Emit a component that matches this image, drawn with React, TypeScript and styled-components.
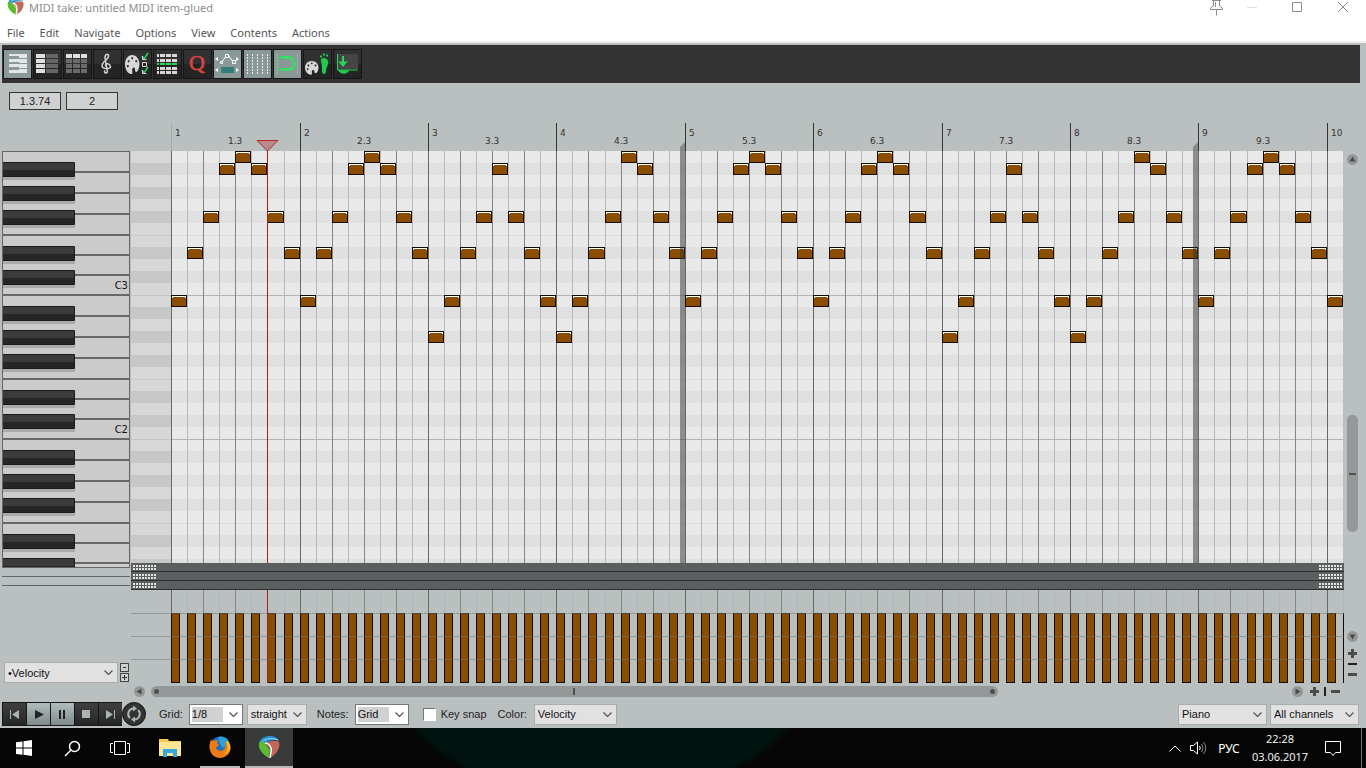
import React, { useEffect, useState } from "react";
import styled, { createGlobalStyle } from "styled-components";

const ui = '"Liberation Sans", Arial, sans-serif';
const segoe = '"Noto Sans", "Open Sans", sans-serif';
const panel = "#bac0c0";

const Global = createGlobalStyle`
  * { box-sizing: border-box; }
  body { margin: 0; background: ${panel}; }
  button { padding: 0; border: 0; background: none; color: inherit; font: inherit; }
  svg { display: block; }
`;

const Page = styled.div`
  display: flex;
  flex-direction: column;
  height: 100vh;
  min-height: 480px;
  font: 11px ${ui};
  color: #222;
  background: ${panel};
`;

/* ---------- title and menu ---------- */
const TitleBar = styled.header`
  display: flex;
  align-items: flex-start;
  height: 22px;
  padding-left: 7px;
  background: #fff;
  color: #8c8c8c;
`;
const Title = styled.h1`
  flex: 1;
  margin: 0 0 0 5px;
  font: 400 11px/16px ${segoe};
`;
const CaptionButton = styled.button<{ $w: number }>`
  display: flex;
  justify-content: center;
  width: ${(p) => p.$w}px;
  height: 16px;
`;
const MenuBar = styled.nav`
  display: flex;
  align-items: flex-start;
  gap: 15px;
  height: 21px;
  padding: 0 7px;
  background: #fff;
  border-bottom: 2px solid #f0f0f0;
  font: 11px/21px ${segoe};
  color: #555;
`;

/* ---------- toolbar ---------- */
const Toolbar = styled.div`
  display: flex;
  align-items: flex-start;
  gap: 1px;
  height: 38px;
  margin: 2px 6px 0 2px;
  padding: 4px 1px;
  background: #333;
`;
const Tool = styled.button<{ $on?: boolean }>`
  width: 29px;
  height: 30px;
  border: 1px solid #161616;
  background: ${(p) => (p.$on ? "#8a9898" : "linear-gradient(#303030 50%, #242424 50%)")};
`;

/* ---------- editor ---------- */
const InfoBar = styled.div`
  display: flex;
  gap: 5px;
  height: 32px;
  padding: 9px 9px 0;
`;
const InfoBox = styled.output`
  width: 52px;
  height: 18px;
  border: 1px solid #333;
  background: #d0d2d2;
  font: 11px/17px ${ui};
  text-align: center;
`;
const Editor = styled.main`
  flex: 1;
  min-height: 0;
  display: grid;
  grid-template-columns: 131px minmax(0, 1fr) 22px;
`;
const KeyColumn = styled.section`
  display: flex;
  flex-direction: column;
  min-height: 0;
  padding: 36px 0 0 2px;
`;
const KeysBox = styled.div`
  flex: 1;
  min-height: 0;
  width: 128px;
  border: 1px solid #666;
  border-left-width: 0;
  overflow: hidden;
  background: #cbcbcb;
  svg { width: 100%; height: 100%; }
`;
const LaneMark = styled.div`
  width: 128px;
  height: 9px;
  border-bottom: 1px solid #62666a;
`;
const LaneControls = styled.div`
  display: flex;
  align-items: flex-end;
  gap: 2px;
  height: 114px;
  padding: 0 0 17px 2px;
`;
const StackedButtons = styled.div`
  display: flex;
  flex-direction: column;
  gap: 1px;
  margin-bottom: 1px;
`;
const TinyButton = styled.button`
  width: 9px;
  height: 9px;
  border: 1px solid #444;
  background: #cdd0d0;
`;
const Timeline = styled.section`
  display: flex;
  flex-direction: column;
  min-height: 0;
`;
const Strip = styled.div<{ $h?: number }>`
  flex: ${(p) => (p.$h ? `0 0 ${p.$h}px` : "1 1 0")};
  min-height: 0;
  overflow: hidden;
  svg { width: 100%; height: 100%; }
`;
const Lane = styled.div`
  display: flex;
  justify-content: space-between;
  align-items: flex-end;
  height: 9px;
  padding: 0 1px 0 2px;
  background: #5b5f5f;
  border-bottom: 1px solid #2c3030;
`;
const ScrollRow = styled.div`
  display: flex;
  align-items: center;
  height: 17px;
  padding: 0 4px 0 3px;
`;
const ScrollTrack = styled.div`
  flex: 1;
  padding: 0 12px 0 6px;
`;
const ScrollThumb = styled.div`
  display: flex;
  align-items: center;
  justify-content: space-between;
  width: 75%;
  height: 11px;
  padding: 0 3px;
  border-radius: 6px;
  background: #949898;
`;
const Knob = styled.i`
  width: 5px;
  height: 5px;
  border-radius: 50%;
  background: #505050;
`;
const Notch = styled.i<{ $flat?: boolean }>`
  width: ${(p) => (p.$flat ? 7 : 2)}px;
  height: ${(p) => (p.$flat ? 2 : 7)}px;
  background: #505050;
`;
const ZoomNotch = styled.i<{ $flat?: boolean }>`
  width: ${(p) => (p.$flat ? 9 : 2)}px;
  height: ${(p) => (p.$flat ? 2 : 9)}px;
  background: #222;
`;
const ZoomGroup = styled.div<{ $column?: boolean }>`
  display: flex;
  flex-direction: ${(p) => (p.$column ? "column" : "row")};
  align-items: center;
  gap: 5px;
  margin: ${(p) => (p.$column ? "7px 0 0" : "0 0 0 7px")};
`;
const VerticalBar = styled.aside`
  display: flex;
  flex-direction: column;
  align-items: center;
  padding: 39px 5px 21px 0;
`;
const VerticalTrack = styled.div`
  flex: 1;
  display: flex;
  flex-direction: column;
  justify-content: flex-end;
  padding-bottom: 99px;
`;
const VerticalThumb = styled.div`
  display: flex;
  align-items: center;
  justify-content: center;
  width: 11px;
  height: 117px;
  border-radius: 5px;
  background: #949898;
`;
const IconButton = styled.button`
  display: block;
`;

/* ---------- bottom controls ---------- */
const ControlBar = styled.footer`
  display: flex;
  align-items: center;
  height: 28px;
  padding: 0 7px 0 2px;
`;
const Transport = styled.div`
  display: flex;
  height: 24px;
  border: 1px solid #161616;
  border-right: 0;
  background: #161616;
  gap: 1px;
`;
const TransportButton = styled.button<{ $lit?: boolean }>`
  width: 23px;
  height: 22px;
  color: ${(p) => (p.$lit ? "#222" : "#aab4b4")};
  background: ${(p) => (p.$lit ? "linear-gradient(#b2bcbc, #7f8b8b)" : "linear-gradient(#404040, #262626)")};
`;
const RepeatButton = styled.button`
  width: 24px;
  height: 24px;
  border: 1px solid #161616;
  border-radius: 50%;
  background: #333;
`;
const Label = styled.label<{ $before: number; $after: number }>`
  margin: 0 ${(p) => p.$after}px 0 ${(p) => p.$before}px;
  line-height: 16px;
`;
const Check = styled.input`
  appearance: none;
  width: 13px;
  height: 13px;
  margin: 0 0 0 14px;
  border: 1px solid;
  border-color: #777 #fff #fff #777;
  background: #fff;
`;
const Spacer = styled.div`
  flex: 1;
`;
const SelectBox = styled.span<{ $w: number; $edit?: boolean; $gap?: number }>`
  display: grid;
  align-items: center;
  width: ${(p) => p.$w}px;
  height: 21px;
  margin-left: ${(p) => p.$gap ?? 0}px;
  border: 1px solid ${(p) => (p.$edit ? "#777" : "#a9adad")};
  background: ${(p) => (p.$edit ? "#fff" : "#e1e1e1")};
  > * { grid-area: 1 / 1; }
  svg { justify-self: end; margin-right: 4px; pointer-events: none; }
`;
const SelectField = styled.select<{ $edit?: boolean }>`
  appearance: none;
  width: ${(p) => (p.$edit ? "calc(100% - 21px)" : "100%")};
  height: ${(p) => (p.$edit ? 15 : 19)}px;
  margin-left: ${(p) => (p.$edit ? 2 : 0)}px;
  padding: 0 0 0 ${(p) => (p.$edit ? 0 : 3)}px;
  border: 0;
  border-radius: 0;
  background: ${(p) => (p.$edit ? "#d0d2d2" : "transparent")};
  color: #111;
  font: 11px ${ui};
`;

/* ---------- taskbar ---------- */
const Taskbar = styled.footer`
  display: flex;
  align-items: center;
  height: 40px;
  background: radial-gradient(ellipse 210px 120px at 44% -50px, #00130f 96%, transparent 100%) #050605;
  color: #fff;
  font: 12px ${segoe};
`;
const Task = styled.button<{ $w: number; $active?: boolean }>`
  display: flex;
  align-items: center;
  justify-content: center;
  width: ${(p) => p.$w}px;
  height: 40px;
  background: ${(p) => (p.$active ? "#393a3a" : "none")};
  border-bottom: ${(p) => (p.$active ? "2px solid #b9b9b9" : "0")};
`;
const RunningTask = styled(Task)`
  height: 40px;
  margin: 0 5px 0 4px;
  border-bottom: 2px solid #b9b9b9;
`;
const Clock = styled.time`
  width: 64px;
  text-align: center;
  font: 11px/18px "Open Sans", "Noto Sans", sans-serif;
`;
const DesktopEdge = styled.div`
  width: 5px;
  height: 40px;
  margin-left: 7px;
  border-left: 1px solid #777;
`;

/* ---------- song data ---------- */
const BEAT = 16.05;
const ORIGIN = 40.66;
const ROW = 12;
const slotX = (i: number) => Math.floor(ORIGIN + i * BEAT);

const arpeggios = [
  [12, 8, 5, 1, 0, 1, 5, 8],
  [12, 8, 5, 1, 0, 1, 5, 8],
  [15, 12, 8, 5, 1, 5, 8, 12],
  [15, 12, 8, 5, 0, 1, 5, 8],
];
const range = (n: number) => Array.from({ length: Math.max(0, n) }, (_, i) => i);
const noteRow = (i: number) => arpeggios[Math.floor(i / 8) % 4][i % 8];
const isItemEnd = (i: number) => i > 0 && i % 32 === 0;
const sharps = [1, 3, 5, 8, 10];
const playX = slotX(6);

/* How many eighth notes and octaves fit in the window */
function useExtent() {
  const read = () => ({
    width: window.innerWidth - 153,
    height: window.innerHeight - 356,
  });
  const [extent, setExtent] = useState(read);
  useEffect(() => {
    const update = () => setExtent(read());
    window.addEventListener("resize", update);
    return () => window.removeEventListener("resize", update);
  }, []);
  return {
    width: extent.width,
    height: extent.height,
    slots: range(Math.ceil((extent.width - ORIGIN) / BEAT)),
    octaves: range(Math.ceil(extent.height / 144)),
  };
}

function GridLines({ slots, soft }: { slots: number[]; soft?: boolean }) {
  return (
    <>
      {slots.map((i) => (
        <rect
          key={i}
          x={slotX(i)}
          y="0"
          width="1"
          height="100%"
          fill={i % 8 === 0 ? "#686868" : i % 2 === 0 ? "#858585" : soft ? "#b2b6b6" : "#b8b8b8"}
        />
      ))}
    </>
  );
}

function Ruler() {
  const { slots, width } = useExtent();
  return (
    <svg fontFamily="DejaVu Sans, sans-serif" fontSize="9" fill="#333">
      {slots.filter((i) => i % 4 === 0 && slotX(i) + 14 < width).map((i) => {
        const bar = i / 8 + 1;
        return i % 8 === 0 ? (
          <g key={i}>
            <rect x={slotX(i)} y="8" width="1" height="28" fill={i ? "#333" : "#a5abab"} />
            <text x={slotX(i) + 4} y="21">{bar}</text>
          </g>
        ) : (
          <text key={i} x={slotX(i) - 7} y="29">{`${Math.floor(bar)}.3`}</text>
        );
      })}
      {slots.filter(isItemEnd).map((i) => (
        <path key={i} d={`M${slotX(i)} 27v9h-5v-4z`} fill="#858989" />
      ))}
      <path d={`M${playX - 10} 25.500h21l-10.500 10.500z`} fill="#b88a8a" stroke="#b02a2a" />
    </svg>
  );
}

function Roll() {
  const { slots, octaves } = useExtent();
  return (
    <svg>
      <rect width="100%" height="100%" fill="#e9e9e9" />
      {octaves.map((o) => (
        <g key={o}>
          {sharps.map((r) => (
            <rect key={r} y={(o * 12 + r) * ROW} width="100%" height={ROW} fill="#e0e0e0" />
          ))}
          <rect y={(o * 12 + 7) * ROW} width="100%" height="1" fill="#dedede" />
          <rect y={(o * 12 + 12) * ROW} width="100%" height="1" fill="#b5b5b5" />
        </g>
      ))}
      <rect width="40" height="100%" fill="#d7d7d7" />
      {octaves.map((o) => (
        <g key={o}>
          {sharps.map((r) => (
            <rect key={r} y={(o * 12 + r) * ROW} width="40" height={ROW} fill="#c7c7c7" />
          ))}
          <rect y={(o * 12 + 7) * ROW} width="40" height="1" fill="#cbcbcb" />
          <rect y={(o * 12 + 12) * ROW} width="40" height="1" fill="#c4c4c4" />
        </g>
      ))}
      <GridLines slots={slots} />
      {slots.map((i) => {
        const x = slotX(i);
        const y = noteRow(i) * ROW;
        const w = slotX(i + 1) - x;
        return (
          <g key={i}>
            <rect x={x} y={y} width={w} height="12" fill="#140c02" />
            <rect x={x + 1} y={y + 1} width={w - 2} height="10" fill="#8b4d00" />
            <path d={`M${x + 1} ${y + 1}h${w - 2}v2h-1v-1h-${w - 4}v1h-1z`} fill="#fff" />
          </g>
        );
      })}
      {slots.filter(isItemEnd).map((i) => (
        <rect key={i} x={slotX(i) - 5} width="5" height="100%" fill="#333" opacity=".5" />
      ))}
      <rect x={playX} width="1" height="100%" fill="#a02020" />
      <rect x="100%" width="1" height="100%" fill={panel} transform="translate(-1)" />
    </svg>
  );
}

function VelocityLane() {
  const { slots } = useExtent();
  return (
    <svg>
      <GridLines slots={slots} soft />
      {slots.map((i) => (
        <g key={i}>
          <rect x={slotX(i)} y="23" width="9" height="70" fill="#140c02" />
          <rect x={slotX(i) + 1} y="24" width="7" height="68" fill="#8b4d00" />
        </g>
      ))}
      {[23, 46, 69].map((y) => (
        <rect key={y} y={y} width="100%" height="1" fill="#707878" opacity=".55" />
      ))}
      <rect x={playX} width="1" height="100%" fill="#a02020" />
    </svg>
  );
}

function Keyboard() {
  const { octaves, height } = useExtent();
  return (
    <svg>
      {octaves.map((o) => (
        <g key={o} transform={`translate(0 ${o * 144 - 1})`}>
          {[20, 41, 62, 83, 103, 123, 143].map((y) => (
            <rect key={y} y={y} width="128" height="2" fill="#686868" />
          ))}
          {sharps.map((r) => {
            const y = r * ROW - 1;
            return (
              <g key={r}>
                <rect y={y + 15} width="73" height="3" fill="#aaa8a8" />
                <rect y={y} width="73" height="15" rx="1" fill="#1a1a1a" />
                <rect x="1" y={y + 1} width="71" height="7" fill="#3b3b3b" />
                <rect x="1" y={y + 8} width="71" height="6" fill="#262626" />
              </g>
            );
          })}
          {o * 144 + 142 < height && (
            <text x="126" y="138" textAnchor="end" fontFamily="DejaVu Sans, sans-serif" fontSize="10" fill="#111">
              {`C${3 - o}`}
            </text>
          )}
        </g>
      ))}
      <rect width="1" height="100%" fill="#666" />
    </svg>
  );
}

function LaneGrip() {
  return (
    <svg width="24" height="6" fill="#e4e4e4">
      {[0, 3, 6, 9, 12, 15, 18, 21].map((x) => (
        <path key={x} d={`M${x} 0h2v2h-2zM${x} 3h2v2h-2z`} />
      ))}
    </svg>
  );
}

function RoundArrow({ turn, name }: { turn: number; name: string }) {
  return (
    <IconButton aria-label={name}>
      <svg width="11" height="11" viewBox="0 0 11 11">
        <circle cx="5.500" cy="5.500" r="5.500" fill="#949898" />
        <path d="M2.500 7.500h6l-3-5z" fill="#4c4c4c" transform={`rotate(${turn} 5.500 5.500)`} />
      </svg>
    </IconButton>
  );
}

function ZoomSign({ plus, name }: { plus?: boolean; name: string }) {
  return (
    <IconButton aria-label={name}>
      <svg width="9" height="9" viewBox="0 0 9 9" fill="#4c4c4c">
        <path d={plus ? "M0 3h3v-3h3v3h3v3h-3v3h-3v-3h-3z" : "M0 3h9v3h-9z"} />
      </svg>
    </IconButton>
  );
}

interface DropProps {
  id: string;
  label?: string;
  value: string;
  width: number;
  edit?: boolean;
  gap?: number;
}
function Drop({ id, label, value, width, edit, gap }: DropProps) {
  return (
    <SelectBox $w={width} $edit={edit} $gap={gap}>
      <SelectField id={id} aria-label={label} $edit={edit}>
        <option>{value}</option>
      </SelectField>
      <svg width="9" height="5" viewBox="0 0 9 5">
        <path d="M.5.500l4 4 4-4" fill="none" stroke="#555" strokeWidth="1.200" />
      </svg>
    </SelectBox>
  );
}

function ReaperLogo({ size, y = 0 }: { size: number; y?: number }) {
  return (
    <svg width={size} height={size} viewBox={`0 ${y} 22 22`}>
      <path d="M1 8C2 2 7 0 12 0c4 0 8 2 9 5-4-2-10-1-13 3z" fill="#2590d4" />
      <path d="M1 8c0-3 3-4 6-1l5 7-1 8C5 19 0 13 1 8z" fill="#5dbb31" />
      <path d="M8 8c4-4 9-4 13-2 2 6-3 13-9 16l1-8z" fill="#c4675b" />
      <path d="M7 7c4 0 7 4 6 9l-1 6" fill="none" stroke="#fff" strokeWidth="1.500" />
      <path d="M5 5c4-3 10-3 15-1" fill="none" stroke="#e8f2f8" strokeWidth=".7" />
    </svg>
  );
}

const palette = (
  <path
    fillRule="evenodd"
    d="M9 0c5 0 9 4 9 9 0 4-2 8-4 8s-1-3-2-4-3 0-3 2 1 4-1 4c-4 0-8-4-8-10C0 4 4 0 9 0zM9 2a1.200 1.200 0 1 0 .1 0zM4.500 5a1.200 1.200 0 1 0 .1 0zM14 5a1.200 1.200 0 1 0 .1 0zM3.500 10a1.200 1.200 0 1 0 .1 0z"
    fill="#d8d8d8"
  />
);

const tools: { name: string; on?: boolean; art: React.ReactNode }[] = [
  {
    name: "Piano roll view",
    on: true,
    art: (
      <path
        d="M15 4h8v4h-8zM15 9h8v4h-8zM15 14h8v4h-8zM15 19h8v4h-8zM5 4h10v2h-10zM5 9h10v3h-10zM5 14h10v3h-10zM5 20h10v3h-10z"
        fill="#e2e6e6"
      />
    ),
  },
  {
    name: "Named notes view",
    art: [0, 1, 2, 3].map((r) => (
      <g key={r}>
        <rect x="2" y={4 + r * 5} width="9" height="4" fill="#e0e0e0" />
        <rect x="12" y={4 + r * 5} width="12" height="4" fill="#666" />
      </g>
    )),
  },
  {
    name: "Event list view",
    art: [0, 1, 2, 3].map((r) =>
      [2, 9, 17].map((x, c) => (
        <rect key={`${r}${c}`} x={x} y={4 + r * 5} width={c === 1 ? 7 : 6} height="4" fill={r ? "#6a6a6a" : "#e0e0e0"} />
      )),
    ),
  },
  {
    name: "Notation view",
    art: (
      <g fill="none" stroke="#d4d4d4">
        <path
          d="M13.500 22.500l-2.500-15c0-4 4-4 3.500-1-1 4-6.500 5-6.500 9s9 4 8.500 1-5-4-5-1c0 1 1 1 1 1M13.500 22c-2 2.500-4 0-2.500-1.500"
          strokeWidth="1.500"
        />
      </g>
    ),
  },
  {
    name: "Color options",
    art: (
      <>
        <g transform="translate(1 5) scale(.8 1)">{palette}</g>
        <path d="M18 6l2 3 4-6M18 20l2 3 4-6" fill="none" stroke="#2bd45b" strokeWidth="1.500" />
        <path d="M18.500 6v3.500h4M18.500 12.500h4v4h-4zM18.500 20v3.500h4" fill="none" stroke="#d8d8d8" />
      </>
    ),
  },
  {
    name: "Event grid",
    art: [4, 9, 13, 17, 21].map((y, r) =>
      [3, 6, 12, 18].map((x, c) => (
        <rect
          key={`${r}${c}`}
          x={x}
          y={y}
          width={c ? 5 : 2}
          height={r === 2 ? 2 : 3}
          fill={r === 2 ? "#2bd45b" : "#d8d8d8"}
        />
      )),
    ),
  },
  {
    name: "Quantize",
    art: (
      <text x="13" y="20" textAnchor="middle" fontFamily="Liberation Serif, serif" fontSize="22" fill="#d94444" stroke="#d94444" strokeWidth=".6">
        Q
      </text>
    ),
  },
  {
    name: "Envelope mode",
    on: true,
    art: (
      <g fill="none" stroke="#fff">
        <path d="M8 12l4-6h3l4 6" />
        <path d="M6.500 11.500h2v2h-2zM11.500 4.500h3v3h-3zM18.500 10.500h3v3h-3z" fill="#8a9898" />
        <path d="M1 9l3-2v4zM25 9l-3-2v4zM1 20l3-2v4zM25 20l-3-2v4z" fill="#fff" stroke="none" />
        <path d="M7 17h13v6h-13z" fill="#327d7d" stroke="none" />
      </g>
    ),
  },
  {
    name: "Show grid",
    on: true,
    art: <path d="M3.500 4v20M8.500 4v20M13.500 4v20M18.500 4v20M23.500 4v20" stroke="#e8ecec" strokeDasharray="2 1" />,
  },
  {
    name: "Snap to grid",
    on: true,
    art: (
      <>
        <path d="M23.500 4v20" stroke="#a3b1b1" strokeDasharray="2 1" />
        <path d="M3.500 4v20" stroke="#5fe084" strokeDasharray="2 1" />
        <path d="M6 7.500h8.500a6 6 0 0 1 0 12h-8.500" fill="none" stroke="#29e05c" strokeWidth="3" />
        <path d="M9 7.500h5.500a6 6 0 0 1 0 12h-5.500" fill="none" stroke="#6fc78b" />
      </>
    ),
  },
  {
    name: "Step recording",
    art: (
      <>
        <g transform="translate(1 11) scale(.75 .72)">{palette}</g>
        <path d="M17 11c-1-4 6-4 7 0s-2 6-2 10-4 4-4 0c0-3 0-6-1-10z" fill="#20c84e" />
        <path d="M16 6.500h2M19 4.500h2M22 5.500h2" stroke="#20c84e" strokeWidth="2" />
      </>
    ),
  },
  {
    name: "Dock editor",
    art: (
      <>
        <path d="M4 4h20v15h-20z" fill="#454545" />
        <path d="M3.500 4v16h20" fill="none" stroke="#2bd45b" />
        <path d="M4 20h11c-1 5-9 5-11 0z" fill="#20c84e" />
        <path d="M9 6v8M6.500 12.500l2.500 3 2.500-3z" fill="#2bd45b" stroke="#2bd45b" strokeWidth="2" />
      </>
    ),
  },
];

export default function App() {
  return (
    <Page>
      <Global />
      <TitleBar>
        <ReaperLogo size={17} y={3} />
        <Title>MIDI take: untitled MIDI item-glued</Title>
        <CaptionButton $w={28} aria-label="Pin window">
          <svg width="15" height="16" viewBox="0 0 15 16" fill="none" stroke="#8c8c8c">
            <path d="M3 .5h9M4.500 1v5l-3 2v1.500h12v-1.500l-3-2v-5M7.500 9.500v6M6.500 2v5" />
          </svg>
        </CaptionButton>
        <CaptionButton $w={44} aria-label="Minimize">
          <svg width="10" height="16"><path d="M0 7.500h10" stroke="#e2e2e2" /></svg>
        </CaptionButton>
        <CaptionButton $w={46} aria-label="Maximize">
          <svg width="10" height="16"><path d="M.5 2.500h9v9h-9z" fill="none" stroke="#8c8c8c" /></svg>
        </CaptionButton>
        <CaptionButton $w={46} aria-label="Close">
          <svg width="10" height="16"><path d="M0 2l10 10M10 2l-10 10" stroke="#8c8c8c" /></svg>
        </CaptionButton>
      </TitleBar>
      <MenuBar>
        {["File", "Edit", "Navigate", "Options", "View", "Contents", "Actions"].map((m) => (
          <button key={m}>{m}</button>
        ))}
      </MenuBar>
      <Toolbar>
        {tools.map((t) => (
          <Tool key={t.name} $on={t.on} aria-label={t.name}>
            <svg width="27" height="28" viewBox="0 0 27 28">{t.art}</svg>
          </Tool>
        ))}
      </Toolbar>
      <InfoBar>
        <InfoBox>1.3.74</InfoBox>
        <InfoBox>2</InfoBox>
      </InfoBar>

      <Editor>
        <KeyColumn>
          <KeysBox><Keyboard /></KeysBox>
          <LaneMark />
          <LaneMark />
          <LaneControls>
            <Drop id="lane" label="Lane" value="•Velocity" width={114} />
            <StackedButtons>
              <TinyButton aria-label="Remove lane">
                <svg width="7" height="7"><path d="M2 3.500h3" stroke="#333" /></svg>
              </TinyButton>
              <TinyButton aria-label="Add lane">
                <svg width="7" height="7"><path d="M1 3.500h5M3.500 1v5" stroke="#333" /></svg>
              </TinyButton>
            </StackedButtons>
          </LaneControls>
        </KeyColumn>

        <Timeline>
          <Strip $h={36}><Ruler /></Strip>
          <Strip><Roll /></Strip>
          {[0, 1, 2].map((n) => (
            <Lane key={n}>
              <LaneGrip />
              <LaneGrip />
            </Lane>
          ))}
          <Strip $h={93}><VelocityLane /></Strip>
          <ScrollRow>
            <RoundArrow turn={-90} name="Scroll left" />
            <ScrollTrack>
              <ScrollThumb>
                <Knob />
                <Notch />
                <Knob />
              </ScrollThumb>
            </ScrollTrack>
            <RoundArrow turn={90} name="Scroll right" />
            <ZoomGroup>
              <ZoomSign plus name="Zoom in horizontally" />
              <ZoomNotch />
              <ZoomSign name="Zoom out horizontally" />
            </ZoomGroup>
          </ScrollRow>
        </Timeline>

        <VerticalBar>
          <RoundArrow turn={0} name="Scroll up" />
          <VerticalTrack>
            <VerticalThumb><Notch $flat /></VerticalThumb>
          </VerticalTrack>
          <RoundArrow turn={180} name="Scroll down" />
          <ZoomGroup $column>
            <ZoomSign plus name="Zoom in vertically" />
            <ZoomNotch $flat />
            <ZoomSign name="Zoom out vertically" />
          </ZoomGroup>
        </VerticalBar>
      </Editor>

      <ControlBar>
        <Transport>
          <TransportButton aria-label="Go to start">
            <svg width="23" height="22" fill="currentColor"><path d="M7 7h1v9h-1zM16 7v9l-7-4.500z" /></svg>
          </TransportButton>
          <TransportButton $lit aria-label="Play">
            <svg width="23" height="22" fill="currentColor"><path d="M8 7l9 4.500-9 4.500z" /></svg>
          </TransportButton>
          <TransportButton $lit aria-label="Pause">
            <svg width="23" height="22" fill="currentColor"><path d="M8 7h2v9h-2zM12 7h2v9h-2z" /></svg>
          </TransportButton>
          <TransportButton aria-label="Stop">
            <svg width="23" height="22" fill="currentColor"><path d="M7 7h8v8h-8z" /></svg>
          </TransportButton>
          <TransportButton aria-label="Go to end">
            <svg width="23" height="22" fill="currentColor"><path d="M7 7l7 4.500-7 4.500zM15 7h1v9h-1z" /></svg>
          </TransportButton>
        </Transport>
        <RepeatButton aria-label="Repeat">
          <svg width="22" height="22" fill="none" stroke="#aab4b4" strokeWidth="2">
            <path d="M7 15a5.500 5.500 0 0 1 3-9.500M15 7a5.500 5.500 0 0 1-3 9.500" />
            <path d="M10 2.500l4 3-4 3zM12 13.500l-4 3 4 3z" fill="#aab4b4" stroke="none" />
          </svg>
        </RepeatButton>
        <Label htmlFor="grid" $before={13} $after={6}>Grid:</Label>
        <Drop id="grid" value="1/8" width={54} edit />
        <Drop id="shape" label="Grid type" value="straight" width={60} gap={4} />
        <Label htmlFor="notes" $before={10} $after={6}>Notes:</Label>
        <Drop id="notes" value="Grid" width={54} edit />
        <Check type="checkbox" id="snap" />
        <Label htmlFor="snap" $before={5} $after={0}>Key snap</Label>
        <Label htmlFor="color" $before={11} $after={7}>Color:</Label>
        <Drop id="color" value="Velocity" width={83} />
        <Spacer />
        <Drop id="name" label="Track" value="Piano" width={89} />
        <Drop id="channel" label="Channel" value="All channels" width={89} gap={3} />
      </ControlBar>

      <Taskbar>
        <Task $w={48} aria-label="Start">
          <svg width="16" height="16" viewBox="0 0 16 16" fill="#fff">
            <path d="M0 2.300l6.500-.9v6.200h-6.500zM7.500 1.200l8.500-1.200v7.600h-8.500zM0 8.600h6.500v6.200l-6.500-.9zM7.500 8.600h8.500v7.400l-8.500-1.200z" />
          </svg>
        </Task>
        <Task $w={48} aria-label="Search">
          <svg width="17" height="17" fill="none" stroke="#fff" strokeWidth="1.500">
            <circle cx="10.500" cy="6.500" r="5" />
            <path d="M7 10l-6 6" />
          </svg>
        </Task>
        <Task $w={48} aria-label="Task view">
          <svg width="20" height="16" fill="none" stroke="#fff">
            <path d="M4.500 1.500h11v13h-11zM3 3.500h-2.500v9h2.500M17 3.500h2.500v9h-2.500" />
          </svg>
        </Task>
        <Task $w={52} aria-label="File Explorer">
          <svg width="22" height="18" viewBox="0 0 22 18">
            <path d="M0 0h9l1 2h12v15h-22z" fill="#f3c94f" />
            <path d="M0 3h22v14h-22z" fill="#ffe594" />
            <path d="M4 10h14v8h-4v-4h-6v4h-4z" fill="#35a8e0" />
          </svg>
        </Task>
        <RunningTask $w={40} aria-label="Firefox">
          <svg width="22" height="22" viewBox="0 0 22 22">
            <circle cx="11" cy="10" r="9.500" fill="#1c70bb" />
            <path d="M9 1c5-2 11 1 11 7l-6 4-3-4z" fill="#2aa0dc" />
            <path d="M2 4l3 1c2-1 4-1 5 0-3 1-2 3 0 4-1 2-3 1-3 3 1 3 6 4 8 1 2-2 2-5 1-8 3 2 3 3 4 5 1-2 0-4-1-5 7 9-1 17-8 17C2 22-2 12 2 4z" fill="#ee7a16" />
            <path d="M17 6c3 4 2 9-2 12 6-1 8-8 4-13z" fill="#fbc52c" />
          </svg>
        </RunningTask>
        <Task $w={48} $active aria-label="REAPER">
          <ReaperLogo size={22} />
        </Task>
        <Spacer />
        <Task $w={24} aria-label="Hidden icons">
          <svg width="12" height="7" fill="none" stroke="#fff"><path d="M.5 6.500l5.500-5.500 5.500 5.500" /></svg>
        </Task>
        <Task $w={23} aria-label="Volume">
          <svg width="17" height="14" fill="none" stroke="#fff">
            <path d="M.5 4.500h3l4-3.500v12l-4-3.500h-3zM9.500 5q1.500 2 0 4" />
            <path d="M11.500 3q3 4 0 8M13.500 1q4.500 6 0 12" stroke="#888" />
          </svg>
        </Task>
        <Task $w={38} aria-label="Input language">РУС</Task>
        <Clock>22:28<br />03.06.2017</Clock>
        <Task $w={42} aria-label="Notifications">
          <svg width="16" height="17" fill="none" stroke="#fff"><path d="M.5 1.500h15v11h-5l-2.500 3-2.500-3h-5z" /></svg>
        </Task>
        <DesktopEdge />
      </Taskbar>
    </Page>
  );
}
